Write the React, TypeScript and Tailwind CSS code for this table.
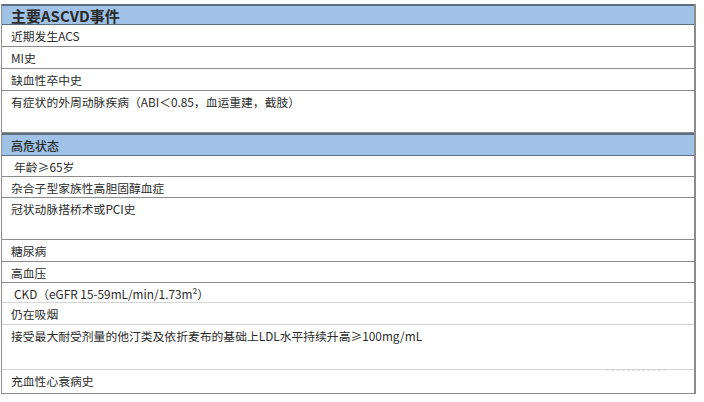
import React from 'react';

type Row = { text: string; h: number; kind?: 'head' | 'row'; light?: boolean; indent?: boolean };

const rows: Row[] = [
    { text: '主要ASCVD事件', h: 21, kind: 'head' },
    { text: '近期发生ACS', h: 22 },
    { text: 'MI史', h: 22 },
    { text: '缺血性卒中史', h: 22 },
    { text: '有症状的外周动脉疾病（ABI＜0.85，血运重建，截肢）', h: 42 },
    { text: '高危状态', h: 23, kind: 'head' },
    { text: '年龄≥65岁', h: 21, indent: true },
    { text: '杂合子型家族性高胆固醇血症', h: 21 },
    { text: '冠状动脉搭桥术或PCI史', h: 42 },
    { text: '糖尿病', h: 22 },
    { text: '高血压', h: 21 },
    { text: 'CKD（eGFR 15-59mL/min/1.73m²）', h: 20, light: true, indent: true },
    { text: '仍在吸烟', h: 22, light: true },
    { text: '接受最大耐受剂量的他汀类及依折麦布的基础上LDL水平持续升高≥100mg/mL', h: 45, light: true },
    { text: '充血性心衰病史', h: 23, light: true },
];

export default function App() {
    return (
        <div className="w-[704px] h-[402px] bg-white overflow-hidden pt-[4px] font-['Noto_Sans_CJK_SC','Noto_Sans',sans-serif] text-[#2a2a2a]">
            <div className="ml-[1px] w-[695px] border-l border-r-2 border-b border-[#8c8c8c] flex flex-col">
                {rows.map((r, i) => {
                    if (r.kind === 'head') {
                        return (
                            <div
                                key={i}
                                style={{ height: r.h }}
                                className={`bg-[#9fc2e6] border-t-2 border-b border-[#5b6e80] pl-[9px] ${i === 0 ? 'text-[15px] font-bold leading-[17px] pt-[1px]' : 'text-[12px] font-medium leading-[18px] pt-[2px]'}`}
                            >
                                {r.text}
                            </div>
                        );
                    }
                    const last = i === rows.length - 1;
                    return (
                        <div
                            key={i}
                            style={{ height: r.h }}
                            className={`text-[11.8px] leading-[14px] pt-[4px] ${r.indent ? 'pl-[12px]' : 'pl-[9px]'} ${last ? '' : r.light ? 'border-b border-[#d4d4d4]' : 'border-b border-[#8c8c8c]'} relative`}
                        >
                            {r.text}
                            {last && (
                                <div className="absolute right-[28px] top-[0px] w-[60px] border-t border-dashed border-[#e4e4e4]" />
                            )}
                        </div>
                    );
                })}
            </div>
        </div>
    );
}
